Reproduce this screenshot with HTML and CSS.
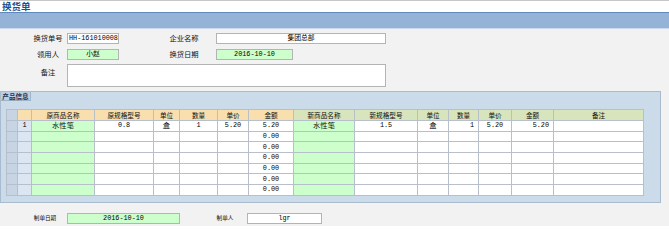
FILE: index.html
```html
<!DOCTYPE html>
<html lang="zh-CN">
<head>
    <meta charset="UTF-8">
    <meta name="viewport" content="width=device-width, initial-scale=1.0">
    <title>换货单</title>
    <link rel="stylesheet" href="styles.css">
</head>
<body>

    <div class="page">
        <div class="titlebar"><h1>换货单</h1></div>
        <div class="band"></div>

        <div class="main">
            <div class="row">
                <span class="lbl">换货单号</span>
                <span class="field f-no">HH-161010008</span>
                <span class="lbl lbl2">企业名称</span>
                <span class="field f-wide center">集团总部</span>
            </div>
            <div class="row row2">
                <span class="lbl">领用人</span>
                <span class="field f-no green center">小赵</span>
                <span class="lbl lbl2">换货日期</span>
                <span class="field f-date green center">2016-10-10</span>
            </div>
            <div class="row row3">
                <span class="lbl">备注</span>
                <span class="field memo"></span>
            </div>

            <div class="panel">
                <div class="tab">产品信息</div>
                <table class="grid">
                    <colgroup>
                        <col style="width:11px"><col style="width:14px">
                        <col style="width:63px"><col style="width:59px"><col style="width:26px">
                        <col style="width:38px"><col style="width:31px"><col style="width:45px">
                        <col style="width:61px"><col style="width:63px"><col style="width:31px">
                        <col style="width:30px"><col style="width:33px"><col style="width:42px">
                        <col style="width:90px">
                    </colgroup>
                    <thead>
                        <tr>
                            <th class="c1"></th><th class="c2"></th>
                            <th class="old">原商品名称</th><th class="old">原规格型号</th><th class="old">单位</th>
                            <th class="old">数量</th><th class="old">单价</th><th class="old">金额</th>
                            <th class="new">新商品名称</th><th class="new">新规格型号</th><th class="new">单位</th>
                            <th class="new">数量</th><th class="new">单价</th><th class="new">金额</th>
                            <th class="new">备注</th>
                        </tr>
                    </thead>
                    <tbody id="rows">
                        <tr>
                            <td class="c1"></td><td class="c2 num">1</td>
                            <td class="green">水性笔</td><td class="num">0.8</td><td>盒</td>
                            <td class="num">1</td><td class="num">5.20</td><td class="num">5.20</td>
                            <td class="green">水性笔</td><td class="num">1.5</td><td>盒</td>
                            <td class="num right">1</td><td class="num">5.20</td><td class="num right">5.20</td>
                            <td></td>
                        </tr>
                    </tbody>
                </table>
            </div>

            <div class="row footer">
                <span class="lbl small">制单日期</span>
                <span class="field f-made green center">2016-10-10</span>
                <span class="lbl small lbl3">制单人</span>
                <span class="field f-user center">lgr</span>
            </div>
        </div>
    </div>

    <script>
        const body = document.getElementById('rows');
        for (let i = 0; i < 6; i++) {
            const tr = document.createElement('tr');
            tr.innerHTML = '<td class="c1"></td><td class="c2"></td>' +
                '<td class="green"></td><td></td><td></td><td></td><td></td>' +
                '<td class="num">0.00</td>' +
                '<td class="green"></td><td></td><td></td><td></td><td></td><td></td><td></td>';
            body.appendChild(tr);
        }
    </script>

</body>
</html>
```

FILE: styles.css
```css
body {
    margin: 0;
    padding: 0;
    background-color: #ffffff;
    font-family: "Liberation Mono", "Noto Sans CJK SC", monospace;
    color: #111111;
}

.page {
    width: 669px;
    height: 244px;
    background-color: #ffffff;
}

.titlebar {
    height: 11px;
    border-top: 1px solid #c8c8c8;
}

.titlebar h1 {
    margin: 0;
    padding-left: 2px;
    font-family: "Noto Sans CJK SC", sans-serif;
    font-size: 9.5px;
    line-height: 11px;
    font-weight: bold;
    color: #1f4f8f;
}

.band {
    height: 15px;
    background-color: #95b3d7;
    border-top: 1px solid #5f88bd;
    border-bottom: 1px solid #cad9ec;
}

.main {
    height: 193px;
    padding-top: 4px;
    background-color: #f2f2f2;
}

.row {
    display: flex;
    align-items: center;
    height: 11px;
    padding-left: 30px;
}

.row2 {
    margin-top: 5px;
}

.row3 {
    margin-top: 4px;
    height: 23px;
    align-items: flex-start;
}

.row3 .lbl {
    margin-top: 3px;
}

.lbl {
    width: 36px;
    text-align: center;
    font-family: "Noto Sans CJK SC", sans-serif;
    font-size: 7.3px;
    line-height: 11px;
    color: #111111;
}

.lbl2 {
    margin-left: 47px;
}

.field {
    box-sizing: border-box;
    height: 11px;
    margin-left: 1px;
    border: 1px solid #b4b4b4;
    background-color: #ffffff;
    font-family: "Liberation Mono", "Noto Sans CJK SC", monospace;
    font-size: 6.8px;
    line-height: 9px;
    padding-left: 1px;
    overflow: hidden;
    white-space: nowrap;
    color: #000000;
}

.lbl2 + .field {
    margin-left: 14px;
}

.center {
    text-align: center;
    padding-left: 0;
}

.green {
    background-color: #ccffcc;
}

.f-no { width: 52px; }
.f-wide { width: 170px; }
.f-date { width: 77px; }
.memo { width: 319px; height: 23px; }

.panel {
    box-sizing: border-box;
    width: 661px;
    height: 112px;
    margin-top: 4px;
    padding: 0 0 0 5px;
    background-color: #cbdbea;
    border: 1px solid #a9bccf;
}

.tab {
    width: 29px;
    height: 8px;
    margin-left: -5px;
    background-color: #bccfe4;
    border-right: 1px solid #9fb3c9;
    border-bottom: 1px solid #9fb3c9;
    font-family: "Noto Sans CJK SC", sans-serif;
    font-size: 6.6px;
    line-height: 8px;
    font-weight: bold;
    color: #1f3050;
    text-align: center;
}

.grid {
    margin-top: 8px;
    border-collapse: collapse;
    table-layout: fixed;
    width: 637px;
    background-color: #ffffff;
}

.grid th,
.grid td {
    padding: 0;
    border: 1px solid #b7c0ca;
    text-align: center;
    overflow: hidden;
    white-space: nowrap;
    font-family: "Noto Sans CJK SC", sans-serif;
    color: #111111;
}

.grid thead tr {
    height: 11px;
}

.grid tbody tr {
    height: 10.7px;
}

.grid th {
    font-size: 6.6px;
    line-height: 9px;
    font-weight: normal;
}

.grid td {
    font-size: 7.3px;
    line-height: 9px;
}

.grid td.num {
    font-family: "Liberation Mono", monospace;
    font-size: 6.8px;
    color: #000000;
}

.grid td.right {
    text-align: right;
    padding-right: 4px;
}

.grid .c1 {
    background-color: #c6d4e4;
}

.grid .c2 {
    background-color: #dce6f2;
}

.grid th.c2,
.grid th.old {
    background-color: #f9dfae;
}

.grid th.new {
    background-color: #d8e4bc;
}

.footer {
    margin-top: 10px;
}

.lbl.small {
    width: 30px;
    font-size: 5.6px;
}

.footer .field {
    margin-left: 7px;
}

.lbl3 {
    margin-left: 30px;
    width: 31px;
}

.f-made { width: 113px; }
.f-user { width: 75px; }
```
